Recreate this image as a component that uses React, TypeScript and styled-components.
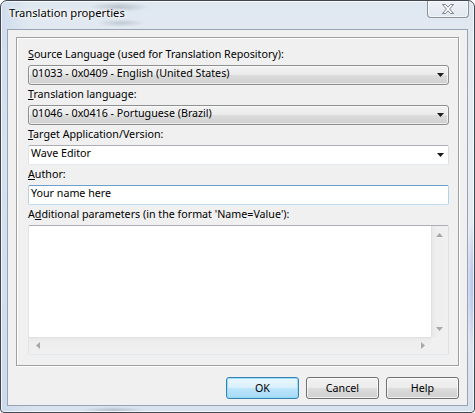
import React from "react";
import styled, { createGlobalStyle } from "styled-components";

const GlobalStyle = createGlobalStyle`
  html, body { margin: 0; padding: 0; background: #ffffff; }
  body {
    font-family: "Noto Sans", "Segoe UI", sans-serif;
    font-size: 10.7px;
    color: #000;
  }
  * { box-sizing: border-box; }
`;

const Window = styled.div`
  width: 475px;
  height: 413px;
  border: 1px solid #3f4650;
  border-radius: 7px 7px 4px 4px;
  padding: 0 6px 6px;
  display: flex;
  flex-direction: column;
  overflow: hidden;
  box-shadow: inset 0 0 0 1px rgba(255, 255, 255, 0.75);
  background:
    radial-gradient(ellipse 30px 5px at 118px 6px, rgba(80, 90, 105, 0.28), transparent 100%),
    radial-gradient(ellipse 24px 4px at 120px 22px, rgba(80, 90, 105, 0.22), transparent 100%),
    radial-gradient(ellipse 8px 5px at 92px 14px, rgba(80, 90, 105, 0.18), transparent 100%),
    radial-gradient(ellipse 9px 70px at 474px 285px, rgba(120, 140, 232, 0.55), transparent 100%),
    radial-gradient(ellipse 32px 3px at 112px 409px, rgba(80, 90, 105, 0.25), transparent 100%),
    linear-gradient(90deg, rgba(190, 208, 234, 0.5) 0%, rgba(190, 208, 234, 0) 6%),
    linear-gradient(180deg, #dfe7f0 0%, #e8eef5 35%, #e3eaf2 70%, #d8e2ee 100%);
`;

const TitleBar = styled.div`
  height: 28px;
  display: flex;
  align-items: flex-start;
`;

const Title = styled.div`
  margin: 4px 0 0 2px;
  line-height: 16px;
  font-size: 11.2px;
  color: #000;
  white-space: nowrap;
  text-shadow: 0 0 7px #fff, 0 0 4px #fff, 0 0 2px #fff;
`;

const CloseButton = styled.div`
  margin-left: auto;
  margin-right: -1px;
  width: 42px;
  height: 17px;
  border: 1px solid #8a929c;
  border-top: none;
  border-radius: 0 0 4px 4px;
  background: linear-gradient(180deg, #eef2f7 0%, #e2e8ef 100%);
  box-shadow: inset 0 0 0 1px rgba(255, 255, 255, 0.6);
  display: flex;
  align-items: center;
  justify-content: center;
`;

const Client = styled.div`
  flex: 1;
  border: 1px solid #98a4b1;
  background: #f0f0f0;
  padding: 7px 8px 6px;
  display: flex;
  flex-direction: column;
`;

const GroupBox = styled.div`
  flex: 1;
  border: 1px solid #a0a0a0;
  box-shadow: inset 1px 1px 0 #fff, 1px 1px 0 #fff;
  padding: 7px 9px 10px 11px;
  display: flex;
  flex-direction: column;
`;

const Label = styled.div`
  height: 18px;
  line-height: 18px;
  margin-bottom: 2px;
  white-space: nowrap;
`;

const Key = styled.span`
  text-decoration: underline;
  text-underline-offset: 1px;
`;

const ListCombo = styled.div`
  height: 20px;
  display: flex;
  border: 1px solid #8e8f8f;
  border-radius: 3px;
  background: linear-gradient(180deg, #f2f2f2 0%, #ebebeb 50%, #dddddd 50%, #cfcfcf 100%);
  box-shadow: inset 0 0 0 1px rgba(255, 255, 255, 0.6);
  padding: 0 4px 0 3px;
`;

const EditCombo = styled.div<{ $focus?: boolean }>`
  height: 20px;
  display: flex;
  background: #fff;
  border: 1px solid;
  border-color: ${(p) =>
    p.$focus ? "#6f9fcc #b4d2ea #c3ddf0 #b4d2ea" : "#abadb3 #dbdfe6 #e3e9ef #e2e3ea"};
  border-radius: 2px;
  padding: 0 4px 0 2px;
`;

const FieldText = styled.span`
  flex: 1;
  line-height: 14px;
  white-space: nowrap;
`;

const DropArrow = styled.svg`
  align-self: center;
  flex: none;
`;

const TextArea = styled.div`
  flex: 1;
  display: grid;
  grid-template-columns: 1fr 17px;
  grid-template-rows: 1fr 17px;
  background: #fff;
  border: 1px solid;
  border-color: #abadb3 #dbdfe6 #e3e9ef #e2e3ea;
  border-radius: 2px;
`;

const VScroll = styled.div`
  grid-column: 2;
  grid-row: 1;
  display: flex;
  flex-direction: column;
  justify-content: space-between;
  background: linear-gradient(90deg, #e6e6e6 0%, #eeeeee 30%, #f0f0f0 100%);
  box-shadow: inset 1px 0 0 #e0e0e0;
`;

const HScroll = styled.div`
  grid-column: 1;
  grid-row: 2;
  display: flex;
  justify-content: space-between;
  background: linear-gradient(180deg, #e6e6e6 0%, #eeeeee 30%, #f0f0f0 100%);
  box-shadow: inset 0 1px 0 #e0e0e0;
`;

const ScrollCorner = styled.div`
  grid-column: 2;
  grid-row: 2;
  background: #f0f0f0;
`;

const ArrowCell = styled.div`
  width: 17px;
  height: 17px;
  display: flex;
  align-items: center;
  justify-content: center;
`;

const ButtonRow = styled.div`
  display: flex;
  justify-content: flex-end;
  gap: 7px;
  margin-top: 11px;
`;

const Button = styled.button<{ $default?: boolean }>`
  width: 73px;
  height: 22px;
  margin: 0;
  padding: 0;
  font: inherit;
  line-height: 20px;
  color: #000;
  border: 1px solid ${(p) => (p.$default ? "#3c7fb1" : "#707070")};
  border-radius: 3px;
  background: ${(p) =>
    p.$default
      ? "linear-gradient(180deg, #eaf6fd 0%, #d9f0fc 50%, #bee6fd 50%, #a7d9f5 100%)"
      : "linear-gradient(180deg, #f2f2f2 0%, #ebebeb 50%, #dddddd 50%, #cfcfcf 100%)"};
  box-shadow: inset 0 0 0 1px
    ${(p) => (p.$default ? "rgba(140, 222, 250, 0.9)" : "rgba(255, 255, 255, 0.7)")};
`;

const Arrow = () => (
  <DropArrow width="7" height="4" viewBox="0 0 7 4">
    <polygon points="0,0 7,0 3.5,4" fill="#1b1b1b" />
  </DropArrow>
);

type Dir = "up" | "down" | "left" | "right";
const triangle: Record<Dir, { w: number; h: number; pts: string }> = {
  up: { w: 7, h: 4, pts: "0,4 3.5,0 7,4" },
  down: { w: 7, h: 4, pts: "0,0 7,0 3.5,4" },
  left: { w: 4, h: 7, pts: "4,0 0,3.5 4,7" },
  right: { w: 4, h: 7, pts: "0,0 4,3.5 0,7" },
};

const ScrollArrow = ({ dir }: { dir: Dir }) => {
  const t = triangle[dir];
  return (
    <ArrowCell>
      <svg width={t.w} height={t.h} viewBox={`0 0 ${t.w} ${t.h}`}>
        <polygon points={t.pts} fill="#a8a8a8" />
      </svg>
    </ArrowCell>
  );
};

const CloseGlyph = () => (
  <svg width="12" height="10" viewBox="0 0 12 10">
    <polygon
      points="0.5,0.5 3.5,0.5 6,3.2 8.5,0.5 11.5,0.5 7.6,5 11.5,9.5 8.5,9.5 6,6.8 3.5,9.5 0.5,9.5 4.4,5"
      fill="#ffffff"
      stroke="#7b828c"
      strokeWidth="1"
      strokeLinejoin="round"
    />
  </svg>
);

export default function App() {
  return (
    <>
      <GlobalStyle />
      <Window>
        <TitleBar>
          <Title>Translation properties</Title>
          <CloseButton>
            <CloseGlyph />
          </CloseButton>
        </TitleBar>
        <Client>
          <GroupBox>
            <Label>
              <Key>S</Key>ource Language (used for Translation Repository):
            </Label>
            <ListCombo>
              <FieldText>01033 - 0x0409 - English (United States)</FieldText>
              <Arrow />
            </ListCombo>
            <Label>
              <Key>T</Key>ranslation language:
            </Label>
            <ListCombo>
              <FieldText>01046 - 0x0416 - Portuguese (Brazil)</FieldText>
              <Arrow />
            </ListCombo>
            <Label>
              <Key>T</Key>arget Application/Version:
            </Label>
            <EditCombo>
              <FieldText>Wave Editor</FieldText>
              <Arrow />
            </EditCombo>
            <Label>
              <Key>A</Key>uthor:
            </Label>
            <EditCombo $focus>
              <FieldText>Your name here</FieldText>
            </EditCombo>
            <Label>
              A<Key>d</Key>ditional parameters (in the format 'Name=Value'):
            </Label>
            <TextArea>
              <VScroll>
                <ScrollArrow dir="up" />
                <ScrollArrow dir="down" />
              </VScroll>
              <HScroll>
                <ScrollArrow dir="left" />
                <ScrollArrow dir="right" />
              </HScroll>
              <ScrollCorner />
            </TextArea>
          </GroupBox>
          <ButtonRow>
            <Button $default>OK</Button>
            <Button>Cancel</Button>
            <Button>Help</Button>
          </ButtonRow>
        </Client>
      </Window>
    </>
  );
}
